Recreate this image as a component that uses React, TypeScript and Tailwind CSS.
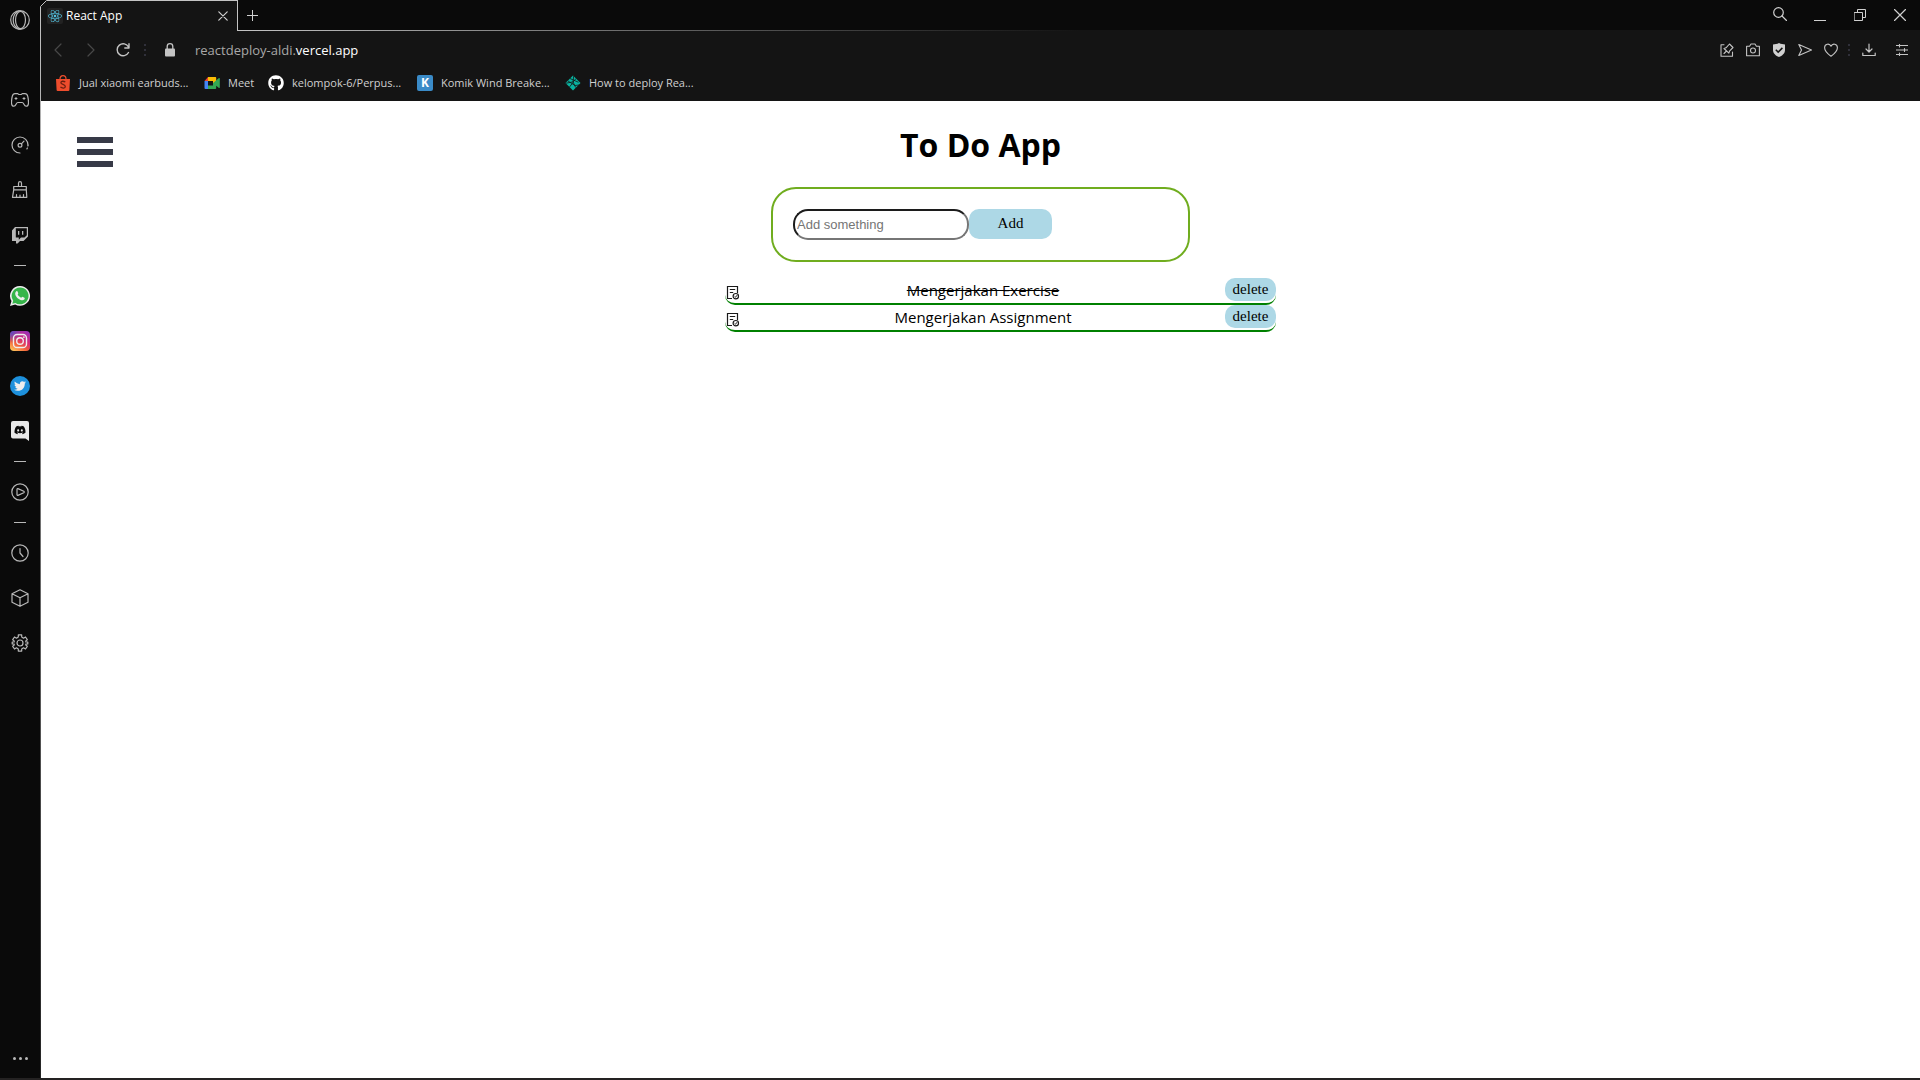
import React, { useState } from "react";
import { FaReact, FaGithub, FaTwitter, FaDiscord } from "react-icons/fa";

function Line({ size = 18, children, sw = 1.2 }: { size?: number; children: React.ReactNode; sw?: number }) {
  return (
    <svg width={size} height={size} viewBox={`0 0 ${size} ${size}`} fill="none" stroke="currentColor" strokeWidth={sw} strokeLinecap="round" strokeLinejoin="round" aria-hidden="true">
      {children}
    </svg>
  );
}

const OperaIcon = () => (
  <Line size={20}>
    <circle cx="10" cy="10" r="9.3" />
    <ellipse cx="10.5" cy="10" rx="5" ry="8.6" />
    <path d="M8.5 1C4.500 3 3.200 6.500 3.200 10s1.300 7 5.300 9" />
  </Line>
);
const GamepadIcon = () => (
  <Line>
    <path d="M4 2.600h2.600c.6 0 .9.900 1.500.9h1.800c.6 0 .9-.9 1.500-.9H14c1.500 0 2.300 1 2.700 2.600.5 2 .8 4.300.8 6.300 0 2.300-.9 3.700-2.400 3.700-2.300 0-2-3.700-4-3.700H6.900c-2 0-1.700 3.700-4 3.700-1.500 0-2.400-1.400-2.400-3.700 0-2 .3-4.300.8-6.300C1.700 3.600 2.500 2.600 4 2.600Z" />
    <path d="M4 7.500h2M5 6.500v2M12 7.500h2M13 6.500v2" strokeWidth="1" />
  </Line>
);
const SpeedIcon = () => (
  <Line>
    <path d="M9 17A8 8 0 1 1 17 9" />
    <path d="M17 9a8 8 0 0 1-1.500 4.500" strokeDasharray="1 2" />
    <circle cx="9" cy="9.300" r="1.900" />
    <path d="m10.400 7.800 2.600-2.600" />
  </Line>
);
const BroomIcon = () => (
  <Line>
    <path d="M7.500 5.500V2.200a1.500 1.500 0 0 1 3 0v3.300M2.700 5.500h12.600v3.300H2.700zM2.700 8.800 1.500 16.300h14.300l-.5-7.500M5.500 16v-2.500M9 16v-2M12.500 16v-2.500" />
  </Line>
);
const TwitchIcon = () => (
  <svg width="18" height="18" viewBox="0 0 18 18" fill="currentColor" aria-hidden="true">
    <path fillRule="evenodd" d="M4 1h13v9.500L12.500 15H9l-2.500 2.500H5V15H1V4.500L4 1Zm.8 1.200v9.300h3v2.300L10 11.500h3.500l2.300-2.300v-7H4.800Z" />
    <path d="M7 5h1.300v3.800H7zM11 5h1.300v3.800H11z" />
  </svg>
);
const WhatsappIcon = () => (
  <svg width="20" height="20" viewBox="0 0 20 20" aria-hidden="true">
    <path fill="#eee" d="M10 0a9.900 9.900 0 1 1-4.800 18.500L0 20l1.500-5A9.900 9.900 0 0 1 10 0Z" />
    <path fill="#36b54a" d="M10 1.500a8.400 8.400 0 1 1-4.500 15.400l-3.200.9.900-3.100A8.400 8.400 0 0 1 10 1.500Z" />
    <path fill="#eee" d="M6.300 5.300c.4-.4 1-.4 1.200.1l.8 1.800c.1.400-.7 1.100-.6 1.400.6 1.300 1.800 2.500 3.400 3.100.4.100.9-1 1.300-.9l2 .9c.6.300.3 1.400-.2 1.900-1 1-2.300.9-3.700.3-2.500-1-4.300-2.900-5.100-5-.5-1.400 0-2.700.9-3.600Z" />
  </svg>
);
const InstagramIcon = () => (
  <svg width="20" height="20" viewBox="0 0 20 20" aria-hidden="true">
    <defs>
      <linearGradient id="ig" x1="0.200" y1="1" x2="0.800" y2="0">
        <stop offset="0" stopColor="#fdc25a" />
        <stop offset="0.300" stopColor="#f4623a" />
        <stop offset="0.600" stopColor="#d62a73" />
        <stop offset="1" stopColor="#9b30b8" />
      </linearGradient>
      <radialGradient id="igb" cx="0" cy="0" r="0.600">
        <stop offset="0" stopColor="#4a55d0" />
        <stop offset="1" stopColor="#4a55d0" stopOpacity="0" />
      </radialGradient>
    </defs>
    <rect width="20" height="20" rx="4" fill="url(#ig)" />
    <rect width="20" height="20" rx="4" fill="url(#igb)" />
    <rect x="3.500" y="3.500" width="13" height="13" rx="3.600" fill="none" stroke="#eee" strokeWidth="1.400" />
    <circle cx="10" cy="10" r="3.300" fill="none" stroke="#eee" strokeWidth="1.400" />
    <circle cx="13.900" cy="6.100" r="0.900" fill="#eee" />
  </svg>
);
const TwitterIcon = () => (
  <span className="flex size-5 items-center justify-center rounded-full bg-[#1d90dc] text-[#eee]">
    <FaTwitter size={12} />
  </span>
);
const DiscordIcon = () => (
  <span className="relative flex h-5 w-[18px] items-start justify-center text-[#0a0a0a]">
    <svg className="absolute inset-0" width="18" height="20" viewBox="0 0 18 20" aria-hidden="true">
      <path fill="#e8e8e8" d="M2 0h14a2 2 0 0 1 2 2v18l-3.500-2.500H2a2 2 0 0 1-2-2V2a2 2 0 0 1 2-2Z" />
    </svg>
    <FaDiscord className="relative mt-[3px]" size={12} />
  </span>
);
const PlayIcon = () => (
  <Line>
    <circle cx="9" cy="9" r="8.200" />
    <path d="M6 6.200c0-.5.400-.8.900-.6l5.900 2.700c.6.300.6 1.100 0 1.400l-5.900 2.700c-.5.200-.9-.1-.9-.6Z" />
  </Line>
);
const ClockIcon = () => (
  <Line>
    <circle cx="9" cy="9" r="8.200" />
    <path d="M9 4.500V9l3 3.500" />
  </Line>
);
const CubeIcon = () => (
  <Line>
    <path d="m9 .8 8 4v8.500l-8 4-8-4V4.800ZM1 4.800l8 4 8-4M9 8.800v8.500" />
  </Line>
);
const GearIcon = () => (
  <Line>
    <circle cx="9" cy="9" r="3" />
    <path d="M7.300.9h3.400v2.200l1.800 1.100 2-1.200 1.800 2.700-1.500 1.200v1l2 .1v2l-2 .1v1l1.500 1.200-1.800 2.700-2-1.200-1.800 1.100v2.200H7.300v-2.200l-1.800-1.100-2 1.200-1.800-2.700 1.500-1.200v-1l-2-.1V8l2-.1v-1L1.700 5.700 3.500 3l2 1.200 1.800-1.100Z" />
  </Line>
);

const ShopeeIcon = () => (
  <svg width="16" height="16" viewBox="0 0 16 16" aria-hidden="true">
    <path fill="#ee4d2d" d="M1 4h14l-.6 11a1 1 0 0 1-1 1H2.600a1 1 0 0 1-1-1Z" />
    <path d="M5 4c0-4.500 6-4.500 6 0" fill="none" stroke="#ee4d2d" strokeWidth="1.200" />
    <path d="M10.300 7C8.500 5.800 5.900 6 5.900 7.700c0 2 4.400 1.500 4.400 3.700 0 2-3 2.100-4.900.7" fill="none" stroke="#6b1f10" strokeWidth="1.300" />
  </svg>
);
const MeetIcon = () => (
  <svg width="16" height="16" viewBox="0 0 16 16" aria-hidden="true">
    <path fill="#ea4335" d="M.5 6 4 2v4Z" />
    <path fill="#fbbc04" d="M4 2h7.200c.6 0 1 .4 1 1v4L9 9V6H4Z" />
    <path fill="#4285f4" d="M.5 6H4v8H1.500a1 1 0 0 1-1-1Z" />
    <path fill="#34a853" d="M4 10.500h5V8l6-5c.3-.3.800 0 .8.400v9.200c0 .4-.5.700-.8.400l-2.800-2.300V13c0 .6-.4 1-1 1H4Z" />
  </svg>
);
const NetlifyIcon = () => (
  <svg width="16" height="16" viewBox="0 0 16 16" aria-hidden="true">
    <path fill="#09b3a0" d="m8 .5 7.500 7.500L8 15.500.5 8Z" />
    <path d="m5 3.500 8.500 3.800M1 8.200l8-1.500M8.700 1 8 7l2.700 5.500M4.500 12 8 7.500M3 6l7 4.500 4-.5M11 3.500 8.500 6.500" fill="none" stroke="#141414" strokeWidth="0.800" />
  </svg>
);
const TaskIcon = () => (
  <svg width="16" height="16" viewBox="0 0 16 16" fill="none" stroke="#1a1a1a" aria-hidden="true">
    <path d="M7 13.500H2.500V1.500h10v6.500M4.800 4.500h5.400M4.800 7.500h3.400" strokeWidth="1.200" />
    <circle cx="10.800" cy="11.200" r="2.700" strokeWidth="1.200" />
    <path d="m9.600 11.300.9.900 1.600-2" strokeWidth="1" />
  </svg>
);
const DotsColumn = () => (
  <span className="flex w-[2px] flex-col gap-[3px]">
    <span className="size-[2px] bg-[#30303a]" />
    <span className="size-[2px] bg-[#30303a]" />
    <span className="size-[2px] bg-[#30303a]" />
  </span>
);

function SideButton({ label, children }: { label: string; children: React.ReactNode }) {
  return (
    <button type="button" aria-label={label} className="flex h-[45px] w-10 items-center justify-center">
      {children}
    </button>
  );
}
const Divider = () => (
  <div className="flex h-4 items-center">
    <span className="h-px w-3 bg-[#b8b8b8]" />
  </div>
);

function Sidebar() {
  return (
    <aside className="flex w-10 shrink-0 flex-col items-center bg-[#0a0a0a] text-[#b8b8b8]">
      <button type="button" aria-label="Opera menu" className="flex size-10 items-center justify-center">
        <OperaIcon />
      </button>
      <nav aria-label="Sidebar" className="mt-[37px] flex flex-col items-center">
        <SideButton label="GX Corner"><GamepadIcon /></SideButton>
        <SideButton label="GX Control"><SpeedIcon /></SideButton>
        <SideButton label="GX Cleaner"><BroomIcon /></SideButton>
        <SideButton label="Twitch"><TwitchIcon /></SideButton>
        <Divider />
        <SideButton label="WhatsApp"><WhatsappIcon /></SideButton>
        <SideButton label="Instagram"><InstagramIcon /></SideButton>
        <SideButton label="Twitter"><TwitterIcon /></SideButton>
        <SideButton label="Discord"><DiscordIcon /></SideButton>
        <Divider />
        <SideButton label="Player"><PlayIcon /></SideButton>
        <Divider />
        <SideButton label="History"><ClockIcon /></SideButton>
        <SideButton label="Extensions"><CubeIcon /></SideButton>
        <SideButton label="Settings"><GearIcon /></SideButton>
      </nav>
      <button type="button" aria-label="Sidebar setup" className="mt-auto flex h-10 w-10 items-center justify-center gap-[3px]">
        <span className="size-[3px] rounded-full bg-[#b8b8b8]" />
        <span className="size-[3px] rounded-full bg-[#b8b8b8]" />
        <span className="size-[3px] rounded-full bg-[#b8b8b8]" />
      </button>
    </aside>
  );
}

function TabStrip() {
  return (
    <div className="flex h-[31px] bg-[#0a0a0a] text-[#d0d0d0]">
      <div className="relative flex w-[197px] items-center border-t border-r border-[#c4c4c4] bg-[#141414] pr-[6px] pl-[6px]">
        <svg className="absolute -top-px -left-px" width="7" height="7" viewBox="0 0 7 7" aria-hidden="true">
          <path d="M0 0h7L0 7Z" fill="#0a0a0a" />
          <path d="M.5 6.500 6.500.5" stroke="#c4c4c4" />
        </svg>
        <span className="flex size-4 items-center justify-center rounded-xs bg-[#222] text-[#53c1de]">
          <FaReact size={14} />
        </span>
        <span className="ml-[3px] flex-1 text-[12px] leading-4 text-white">React App</span>
        <button type="button" aria-label="Close tab" className="flex size-4 items-center justify-center">
          <Line size={10}><path d="m.8.8 8.400 8.400M9.200.8.800 9.200" /></Line>
        </button>
      </div>
      <div className="flex flex-1 flex-col">
        <div className="flex h-[30px] items-center">
          <button type="button" aria-label="New tab" className="flex h-[30px] w-7 items-center justify-center">
            <Line size={11}><path d="M5.500 0v11M0 5.500h11" strokeWidth="1" /></Line>
          </button>
          <div className="ml-auto flex">
            <button type="button" aria-label="Search tabs" className="flex h-[28px] w-10 items-center justify-center">
              <Line size={14}><circle cx="5.500" cy="5.500" r="4.800" /><path d="m9 9 4.500 4.500" /></Line>
            </button>
            <button type="button" aria-label="Minimize" className="flex h-[30px] w-10 items-center justify-center">
              <span className="mt-[11px] h-px w-3 bg-current" />
            </button>
            <button type="button" aria-label="Restore" className="flex h-[30px] w-10 items-center justify-center">
              <Line size={12} sw={1}><path d="M.5 3.500h8v8h-8ZM3.500 3.500v-3h8v8h-3" /></Line>
            </button>
            <button type="button" aria-label="Close window" className="flex h-[30px] w-10 items-center justify-center">
              <Line size={12}><path d="m.5.5 11 11M11.500.5l-11 11" /></Line>
            </button>
          </div>
        </div>
        <div className="h-px bg-linear-to-r from-[#c4c4c4] to-[#141414] to-50%" />
      </div>
    </div>
  );
}

function ToolButton({ label, children, className = "w-[26px]" }: { label: string; children: React.ReactNode; className?: string }) {
  return (
    <button type="button" aria-label={label} className={`flex h-7 shrink-0 items-center justify-center ${className}`}>
      {children}
    </button>
  );
}

function AddressBar() {
  return (
    <div className="flex h-[38px] items-center text-[#c4c4c4]">
      <ToolButton label="Back" className="w-[33px] text-[#484848]"><Line size={14}><path d="M10 1 4 7l6 6" /></Line></ToolButton>
      <ToolButton label="Forward" className="w-[33px] text-[#484848]"><Line size={14}><path d="m4 1 6 6-6 6" /></Line></ToolButton>
      <ToolButton label="Reload" className="w-8">
        <Line size={14} sw={1.4}><path d="M12.500 9.500A6 6 0 1 1 12.500 4M13 .8V5H8.800" /></Line>
      </ToolButton>
      <span className="ml-[5px]"><DotsColumn /></span>
      <svg className="ml-[19px]" width="10" height="14" viewBox="0 0 10 14" aria-hidden="true">
        <rect y="5.500" width="10" height="8" rx="1" fill="#c4c4c4" />
        <path d="M2.200 6V3.500a2.800 2.800 0 0 1 5.600 0V6" fill="none" stroke="#c4c4c4" strokeWidth="1.300" />
      </svg>
      <p className="ml-5 flex-1 text-[13px] leading-5 text-[#a8a8a8]">
        reactdeploy-aldi.<span className="text-white">vercel.app</span>
      </p>
      <ToolButton label="Pin page">
        <Line size={14} sw={1.1}><path d="M4 1.800H1v11.400h11.500V9M9.500 1l3.500 3.500-3.500 3.700-.6 2L4 5.500l2-.7ZM6.500 8 4 10.500" /></Line>
      </ToolButton>
      <ToolButton label="Snapshot">
        <Line size={14} sw={1.1}><path d="M.6 3.200h3L5 1h4l1.400 2.200h3v9.600H.6Z" /><circle cx="7" cy="7.500" r="2.500" /></Line>
      </ToolButton>
      <ToolButton label="Protection">
        <svg width="14" height="14" viewBox="0 0 14 14" aria-hidden="true">
          <path d="M7 0c2 1 4 1.400 6 1.500V7c0 3.500-2.800 5.800-6 7-3.200-1.200-6-3.500-6-7V1.500C3 1.400 5 1 7 0Z" fill="#d0d0d0" />
          <path d="m3.800 6.800 2.400 2.300 4.200-4.200" fill="none" stroke="#141414" strokeWidth="1.500" />
        </svg>
      </ToolButton>
      <ToolButton label="My Flow">
        <Line size={14} sw={1.1}><path d="M.8 1.500 13.500 7 .8 12.500 3.500 7Z" /></Line>
      </ToolButton>
      <ToolButton label="Bookmark">
        <Line size={14} sw={1.1}><path d="M7 13.200C2.800 10.200.6 7.700.6 4.700c0-3.800 4.800-5 6.400-1.400 1.600-3.600 6.400-2.400 6.400 1.400 0 3-2.200 5.500-6.400 8.500Z" /></Line>
      </ToolButton>
      <span className="mx-1"><DotsColumn /></span>
      <ToolButton label="Downloads" className="w-[30px]">
        <Line size={14} sw={1.2}><path d="M7 1v7.500M4 6l3 3 3-3M.8 10v2.500h12.400V10" /></Line>
      </ToolButton>
      <ToolButton label="Easy setup" className="w-9">
        <Line size={12} sw={1.1}><path d="M0 1.500h12M0 6h12M0 10.500h12M3.500 0v3M8.500 4.500v3M3.500 9v3" /></Line>
      </ToolButton>
    </div>
  );
}

const bookmarks = [
  { label: "Jual xiaomi earbuds...", icon: <ShopeeIcon />, width: "w-[149px]" },
  { label: "Meet", icon: <MeetIcon />, width: "w-16" },
  { label: "kelompok-6/Perpus...", icon: <FaGithub size={16} color="#fff" />, width: "w-[149px]" },
  {
    label: "Komik Wind Breake...",
    icon: <span className="flex size-4 items-center justify-center rounded-xs bg-[#3a8bc8] text-[12px] leading-4 font-bold text-white">K</span>,
    width: "w-[148px]",
  },
  { label: "How to deploy Rea...", icon: <NetlifyIcon />, width: "w-[149px]" },
];

function BookmarksBar() {
  return (
    <nav aria-label="Bookmarks" className="flex h-8 items-center pb-[5px] pl-[14px] text-[11px] leading-4 text-[#d0d0d0]">
      {bookmarks.map((b) => (
        <a key={b.label} href="#" className={`flex shrink-0 items-center gap-2 whitespace-nowrap ${b.width}`}>
          <span aria-hidden="true" className="shrink-0">{b.icon}</span>
          {b.label}
        </a>
      ))}
    </nav>
  );
}

function TodoApp() {
  const [text, setText] = useState("");
  const [todos, setTodos] = useState([
    { id: 1, title: "Mengerjakan Exercise", done: true },
    { id: 2, title: "Mengerjakan Assignment", done: false },
  ]);
  const add = (e: React.FormEvent) => {
    e.preventDefault();
    if (!text.trim()) return;
    setTodos([...todos, { id: Date.now(), title: text, done: false }]);
    setText("");
  };
  return (
    <main className="relative flex flex-1 flex-col items-center bg-white pt-6 text-black">
      <button type="button" aria-label="Open menu" className="absolute top-9 left-9 flex w-9 flex-col gap-[6px]">
        <span className="h-[6px] bg-[#373a47]" />
        <span className="h-[6px] bg-[#373a47]" />
        <span className="h-[6px] bg-[#373a47]" />
      </button>
      <h1 className="text-[32px] leading-10 font-bold">To Do App</h1>
      <form onSubmit={add} className="mt-[22px] flex w-[419px] max-w-full rounded-[25px] border-2 border-[#70ad1f] p-5">
        <input
          aria-label="Add something"
          placeholder="Add something"
          value={text}
          onChange={(e) => setText(e.target.value)}
          className="h-[31px] w-44 rounded-[15px] border-2 border-t-[#1c1c1c] border-r-[#767676] border-b-[#767676] border-l-[#1c1c1c] px-[2px] font-['Liberation_Sans',sans-serif] text-[13px] placeholder:text-[#757575]"
        />
        <button type="submit" className="h-[30px] w-[83px] rounded-[10px] bg-[#add8e6] pb-[2px] font-['Liberation_Serif',serif] text-[15px] leading-5">
          Add
        </button>
      </form>
      <ul className="mt-4 w-[591px] max-w-full pl-10">
        {todos.map((t) => (
          <li key={t.id} className="flex h-[27px] items-start justify-between rounded-[10px] border-b-2 border-[#008000]">
            <button
              type="button"
              aria-label={`Toggle ${t.title}`}
              className="mt-[7px]"
              onClick={() => setTodos(todos.map((x) => (x.id === t.id ? { ...x, done: !x.done } : x)))}
            >
              <TaskIcon />
            </button>
            <span className={t.done ? "text-[15px] leading-6 line-through" : "text-[15px] leading-6"}>{t.title}</span>
            <button
              type="button"
              onClick={() => setTodos(todos.filter((x) => x.id !== t.id))}
              className="h-[23px] w-[51px] rounded-[10px] bg-[#add8e6] pb-px font-['Liberation_Serif',serif] text-[15px] leading-5"
            >
              delete
            </button>
          </li>
        ))}
      </ul>
    </main>
  );
}

export default function App() {
  return (
    <div className="flex min-h-screen flex-col bg-[#242222] pb-[2px] font-['Open_Sans',sans-serif]">
      <div className="flex flex-1">
        <Sidebar />
        <div className="flex w-px flex-col bg-linear-to-b from-[#c4c4c4] to-[#242424]">
          <span className="h-[6px] bg-[#0a0a0a]" />
        </div>
        <div className="flex min-w-0 flex-1 flex-col bg-[#141414]">
          <TabStrip />
          <AddressBar />
          <BookmarksBar />
          <TodoApp />
        </div>
      </div>
    </div>
  );
}
